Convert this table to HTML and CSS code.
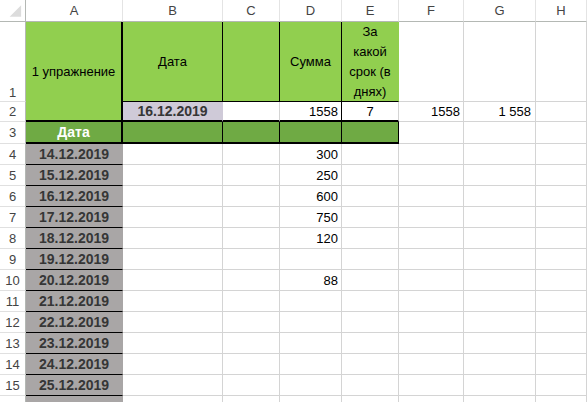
FILE: index.html
```html
<!DOCTYPE html>
<html lang="ru">
<head>
    <meta charset="UTF-8">
    <title>Книга1 - Excel</title>
    <link rel="stylesheet" href="styles.css">
</head>
<body>
    <div class="sheet">
        <!-- column headers -->
        <div class="corner">
            <svg width="26" height="22" viewBox="0 0 26 22"><polygon points="22,5 22,17 10,17" fill="#dcdcdc"/></svg>
        </div>
        <div class="col">A</div>
        <div class="col">B</div>
        <div class="col">C</div>
        <div class="col">D</div>
        <div class="col">E</div>
        <div class="col">F</div>
        <div class="col">G</div>
        <div class="col">H</div>

        <!-- row 1 -->
        <div class="rh low">1</div>
        <div class="green merged c line-r2 line-b2">1 упражнение</div>
        <div class="green c line-r line-b">Дата</div>
        <div class="green line-r line-b"></div>
        <div class="green c line-r line-b">Сумма</div>
        <div class="green c line-b wrap">За<br>какой<br>срок (в<br>днях)</div>
        <div></div>
        <div></div>
        <div></div>

        <!-- row 2 -->
        <div class="rh">2</div>
        <div class="lav c b line-b2">16.12.2019</div>
        <div class="line-b2"></div>
        <div class="r line-r line-b2">1558</div>
        <div class="c line-b2">7</div>
        <div class="r">1558</div>
        <div class="r acc">1 558</div>
        <div></div>

        <!-- row 3 -->
        <div class="rh">3</div>
        <div class="dark c b head line-r2 line-b2">Дата</div>
        <div class="dark line-r line-b2"></div>
        <div class="dark line-r line-b2"></div>
        <div class="dark line-r line-b2"></div>
        <div class="dark line-r line-b2"></div>
        <div></div>
        <div></div>
        <div></div>

        <div class="rh">4</div>
        <div class="grey c b line-b">14.12.2019</div>
        <div></div><div></div>
        <div class="r">300</div>
        <div></div><div></div><div></div><div></div>

        <div class="rh">5</div>
        <div class="grey c b line-b">15.12.2019</div>
        <div></div><div></div>
        <div class="r">250</div>
        <div></div><div></div><div></div><div></div>

        <div class="rh">6</div>
        <div class="grey c b line-b">16.12.2019</div>
        <div></div><div></div>
        <div class="r">600</div>
        <div></div><div></div><div></div><div></div>

        <div class="rh">7</div>
        <div class="grey c b line-b">17.12.2019</div>
        <div></div><div></div>
        <div class="r">750</div>
        <div></div><div></div><div></div><div></div>

        <div class="rh">8</div>
        <div class="grey c b line-b">18.12.2019</div>
        <div></div><div></div>
        <div class="r">120</div>
        <div></div><div></div><div></div><div></div>

        <div class="rh">9</div>
        <div class="grey c b line-b">19.12.2019</div>
        <div></div><div></div>
        <div></div>
        <div></div><div></div><div></div><div></div>

        <div class="rh">10</div>
        <div class="grey c b line-b">20.12.2019</div>
        <div></div><div></div>
        <div class="r">88</div>
        <div></div><div></div><div></div><div></div>

        <div class="rh">11</div>
        <div class="grey c b line-b">21.12.2019</div>
        <div></div><div></div><div></div>
        <div></div><div></div><div></div><div></div>

        <div class="rh">12</div>
        <div class="grey c b line-b">22.12.2019</div>
        <div></div><div></div><div></div>
        <div></div><div></div><div></div><div></div>

        <div class="rh">13</div>
        <div class="grey c b line-b">23.12.2019</div>
        <div></div><div></div><div></div>
        <div></div><div></div><div></div><div></div>

        <div class="rh">14</div>
        <div class="grey c b line-b">24.12.2019</div>
        <div></div><div></div><div></div>
        <div></div><div></div><div></div><div></div>

        <div class="rh">15</div>
        <div class="grey c b line-b">25.12.2019</div>
        <div></div><div></div><div></div>
        <div></div><div></div><div></div><div></div>

        <!-- row 16 is only a sliver at the bottom edge -->
        <div class="rh"></div>
        <div class="grey line-b"></div>
        <div></div><div></div><div></div>
        <div></div><div></div><div></div><div></div>
    </div>
</body>
</html>
```

FILE: styles.css
```css
body {
    margin: 0;
    background: #fff;
    font-family: "Liberation Sans", Arial, sans-serif;
    font-size: 13px;
    color: #000;
    overflow: hidden;
}
.sheet {
    display: grid;
    grid-template-columns: 26px 97px 100px 57px 62px 57px 65px 72px 51px;
    grid-template-rows: 22px 80px 20px 22px repeat(13, 21px);
}
.sheet > div {
    box-sizing: border-box;
    display: flex;
    align-items: center;
    padding: 0 3px;
    white-space: nowrap;
    overflow: hidden;
    border-right: 1px solid #d4d4d4;
    border-bottom: 1px solid #d4d4d4;
}

/* headers */
.sheet > .corner {
    padding: 0;
    border-right-color: #b4b8b4;
    border-bottom-color: #b4b8b4;
}
.sheet > .col {
    justify-content: center;
    color: #444;
    border-right-color: #e4e4e4;
    border-bottom-color: #b4b8b4;
}
.sheet > .rh {
    justify-content: center;
    padding: 0;
    color: #444;
    border-right-color: #b4b8b4;
    border-bottom-color: #e0e0e0;
}
.sheet > .low { align-items: flex-end; padding-bottom: 1px; }

/* alignment */
.sheet > .c { justify-content: center; text-align: center; }
.sheet > .r { justify-content: flex-end; }
.sheet > .acc { padding-right: 4px; }
.sheet > .wrap { white-space: normal; line-height: 20px; }
.b { font-weight: bold; font-size: 14px; color: #363636; }
.head { color: #fff; }

/* fills */
.sheet > .green { background: #91cf4f; border-color: #91cf4f; }
.sheet > .dark { background: #6faa44; border-color: #6faa44; }
.sheet > .grey { background: #a9a6a6; border-right-color: #a9a6a6; }
.sheet > .lav { background: #cfcad8; border-right-color: #cfcad8; }

/* borders */
.sheet > .line-r { border-right: 1px solid #000; }
.sheet > .line-r2 { border-right: 2px solid #000; }
.sheet > .line-b { border-bottom: 1px solid #000; }
.sheet > .line-b2 { border-bottom: 2px solid #000; }
.merged { grid-row: span 2; }
```
